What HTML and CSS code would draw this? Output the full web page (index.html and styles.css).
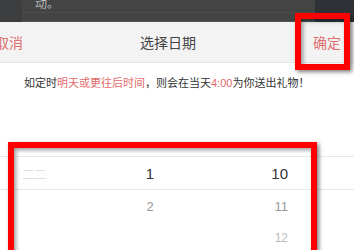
FILE: index.html
```html
<!DOCTYPE html>
<html lang="zh-CN">
<head>
  <meta charset="UTF-8">
  <title>选择日期</title>
  <link rel="stylesheet" href="styles.css">
</head>
<body>
  <div class="screen">
    <div class="backdrop">
      <div class="card"><span class="card-text">动。</span></div>
    </div>

    <div class="sheet">
      <div class="header">
        <span class="cancel">取消</span>
        <span class="title">选择日期</span>
        <span class="ok">确定</span>
      </div>

      <p class="notice">如定时<em>明天或更往后时间</em>，则会在当天<em>4:00</em>为你送出礼物！</p>

      <div class="picker">
        <div class="row current">
          <span class="col faded">二二</span>
          <span class="col">1</span>
          <span class="col">10</span>
        </div>
        <div class="row next">
          <span class="col"></span>
          <span class="col">2</span>
          <span class="col">11</span>
        </div>
        <div class="row last">
          <span class="col"></span>
          <span class="col"></span>
          <span class="col">12</span>
        </div>
      </div>
    </div>

    <div class="mark mark-ok"></div>
    <div class="mark mark-picker"></div>
  </div>
</body>
</html>
```

FILE: styles.css
```css
body {
  margin: 0;
  font-family: "Liberation Sans", "Noto Sans CJK SC", sans-serif;
  background: #fff;
}
.screen { position: relative; width: 354px; height: 250px; overflow: hidden; }

.backdrop { height: 22px; background: #2f3338; display: flex; }
.backdrop::before { content: ""; width: 22px; background: #3b3d3f; }
.card { width: 293px; background: #444; border-bottom: 1px solid #555; box-sizing: border-box; position: relative; }
.card::after { content: ""; position: absolute; left: 0; right: 0; top: 12px; border-top: 1px solid #4c4c4c; }
.card-text { display: block; margin: -6px 0 0 13px; font-size: 12px; color: #bbb; }

.header {
  height: 40px;
  background: #f3f3f3;
  border-bottom: 1px solid #e4e4e4;
  display: flex;
  justify-content: space-between;
  align-items: center;
  font-size: 14px;
}
.cancel { margin-left: -5px; color: #df7070; }
.title { color: #444; }
.ok { margin-right: 13px; color: #df7070; }

.notice { margin: 11px 0 0 24px; font-size: 11px; color: #333; }
.notice em { font-style: normal; color: #e36a6a; }

.picker { margin-top: 66px; }
.row { display: grid; grid-template-columns: 75px 150px 129px; height: 33px; align-items: center; }
.row .col:nth-child(2) { text-align: center; }
.row .col:nth-child(3) { text-align: right; padding-right: 66px; }
.current { border-top: 1px solid #e8e8e8; border-bottom: 1px solid #e8e8e8; height: 32px; font-size: 15px; color: #333; }
.current .faded { font-size: 13px; color: #e0e0e0; padding-left: 22px; letter-spacing: -1px; }
.next { font-size: 13px; color: #999; }
.last { font-size: 12px; color: #bbb; height: 30px; }

.mark {
  position: absolute;
  border: 6px solid #f00;
  box-shadow: 2px 2px 4px rgba(0, 0, 0, 0.5), inset 2px 2px 4px rgba(0, 0, 0, 0.4);
}
.mark-ok { left: 295px; top: 13px; width: 43px; height: 45px; }
.mark-picker { left: 8px; top: 142px; width: 297px; height: 130px; }
```
